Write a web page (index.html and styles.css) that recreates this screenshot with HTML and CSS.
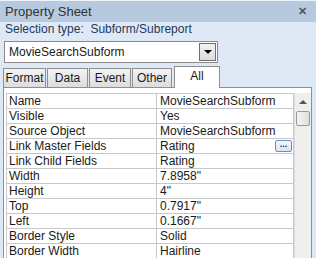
FILE: index.html
```html
<!DOCTYPE html>
<html lang="en">
<head>
    <meta charset="UTF-8">
    <title>Property Sheet</title>
    <link rel="stylesheet" href="styles.css">
</head>
<body>
    <div class="sheet">
        <div class="title-bar">
            <span class="title">Property Sheet</span>
            <span class="close">&#x2715;</span>
        </div>
        <div class="selection">Selection type:&nbsp; Subform/Subreport</div>

        <div class="combo">
            <span class="combo-text">MovieSearchSubform</span>
            <span class="combo-btn"><span class="arrow"></span></span>
        </div>

        <div class="tabs">
            <div class="tab">Format</div>
            <div class="tab">Data</div>
            <div class="tab">Event</div>
            <div class="tab">Other</div>
            <div class="tab active">All</div>
        </div>

        <div class="panel">
            <div class="grid">
                <div class="rows">
                    <div class="row"><div class="label">Name</div><div class="value">MovieSearchSubform</div></div>
                    <div class="row"><div class="label">Visible</div><div class="value">Yes</div></div>
                    <div class="row"><div class="label">Source Object</div><div class="value">MovieSearchSubform</div></div>
                    <div class="row"><div class="label">Link Master Fields</div><div class="value">Rating<span class="build">...</span></div></div>
                    <div class="row"><div class="label">Link Child Fields</div><div class="value">Rating</div></div>
                    <div class="row"><div class="label">Width</div><div class="value">7.8958"</div></div>
                    <div class="row"><div class="label">Height</div><div class="value">4"</div></div>
                    <div class="row"><div class="label">Top</div><div class="value">0.7917"</div></div>
                    <div class="row"><div class="label">Left</div><div class="value">0.1667"</div></div>
                    <div class="row"><div class="label">Border Style</div><div class="value">Solid</div></div>
                    <div class="row"><div class="label">Border Width</div><div class="value">Hairline</div></div>
                </div>
                <div class="scrollbar">
                    <div class="up"></div>
                    <div class="thumb"></div>
                </div>
            </div>
        </div>
    </div>
</body>
</html>
```

FILE: styles.css
```css
body {
    margin: 0;
    padding: 0;
    background-color: #dfe9f5;
    font-family: "Liberation Sans", Arial, sans-serif;
    font-size: 12px;
    color: #1a1a1a;
    overflow: hidden;
}
.sheet {
    width: 316px;
    height: 258px;
    display: flex;
    flex-direction: column;
}
.sheet > div {
    flex-shrink: 0;
}
.title-bar {
    height: 22px;
    background-color: #b6c9df;
    border-top: 1px solid #eef3f9;
    box-sizing: border-box;
    display: flex;
    align-items: center;
    justify-content: space-between;
    padding: 0 9px 0 5px;
}
.title {
    font-size: 13px;
    color: #333;
}
.close {
    font-size: 11px;
    font-weight: bold;
    color: #555;
}
.selection {
    height: 19px;
    line-height: 14px;
    padding-left: 5px;
    color: #1e395b;
}
.combo {
    margin-left: 4px;
    width: 214px;
    height: 22px;
    box-sizing: border-box;
    background-color: #fff;
    border: 1px solid #8a8a8a;
    display: flex;
    align-items: center;
    justify-content: space-between;
    padding: 0 1px 0 4px;
}
.combo-btn {
    width: 17px;
    height: 18px;
    box-sizing: border-box;
    border: 1px solid #707070;
    background: linear-gradient(#f2f2f2, #dcdcdc);
    display: flex;
    align-items: center;
    justify-content: center;
}
.arrow {
    width: 0;
    height: 0;
    border-left: 4px solid transparent;
    border-right: 4px solid transparent;
    border-top: 4px solid #000;
}
.tabs {
    display: flex;
    align-items: flex-end;
    margin-top: 1px;
    padding-left: 3px;
    height: 23px;
    gap: 1px;
}
.tab {
    height: 19px;
    box-sizing: border-box;
    border: 1px solid #8e8f8f;
    border-bottom: none;
    background: linear-gradient(#f3f3f3, #dddddd);
    line-height: 18px;
    text-align: center;
}
.tab:nth-child(1) { width: 43px; }
.tab:nth-child(2) { width: 41px; }
.tab:nth-child(3) { width: 42px; }
.tab:nth-child(4) { width: 40px; }
.tab.active {
    width: 46px;
    height: 22px;
    margin-left: 1px;
    background: #fff;
    line-height: 18px;
    margin-bottom: -1px;
    position: relative;
}
.panel {
    flex: 1 0 0;
    min-height: 0;
    margin-left: 3px;
    width: 309px;
    box-sizing: border-box;
    background-color: #fff;
    border: 1px solid #8e8f8f;
    border-bottom: none;
    padding: 5px 0 0 2px;
}
.grid {
    display: flex;
}
.rows {
    width: 287px;
    border-top: 1px solid #c8c8c8;
    border-left: 1px solid #c8c8c8;
}
.row {
    display: grid;
    grid-template-columns: 150px 137px;
    height: 15px;
    box-sizing: border-box;
    border-bottom: 1px solid #c8c8c8;
}
.label, .value {
    line-height: 14px;
    padding-left: 2px;
    white-space: nowrap;
}
.label {
    border-right: 1px solid #c8c8c8;
}
.value {
    position: relative;
    padding-left: 3px;
    border-right: 1px solid #c8c8c8;
}
.build {
    position: absolute;
    right: 1px;
    top: 1px;
    width: 17px;
    height: 12px;
    box-sizing: border-box;
    border: 1px solid #6d8fbf;
    border-radius: 2px;
    background: linear-gradient(#f4f8fd, #d6e4f4);
    font-size: 9px;
    font-weight: bold;
    line-height: 6px;
    text-align: center;
    color: #1e395b;
}
.scrollbar {
    width: 17px;
    height: 170px;
    box-sizing: border-box;
    background-color: #efefef;
    border-left: 1px solid #dcdcdc;
    padding-top: 7px;
}
.up {
    width: 0;
    height: 0;
    margin: 0 auto;
    border-left: 4px solid transparent;
    border-right: 4px solid transparent;
    border-bottom: 4px solid #555;
}
.thumb {
    margin: 7px auto 0;
    width: 14px;
    height: 15px;
    box-sizing: border-box;
    border: 1px solid #9a9a9a;
    border-radius: 2px;
    background: linear-gradient(90deg, #f4f4f4, #dedede);
}
```
